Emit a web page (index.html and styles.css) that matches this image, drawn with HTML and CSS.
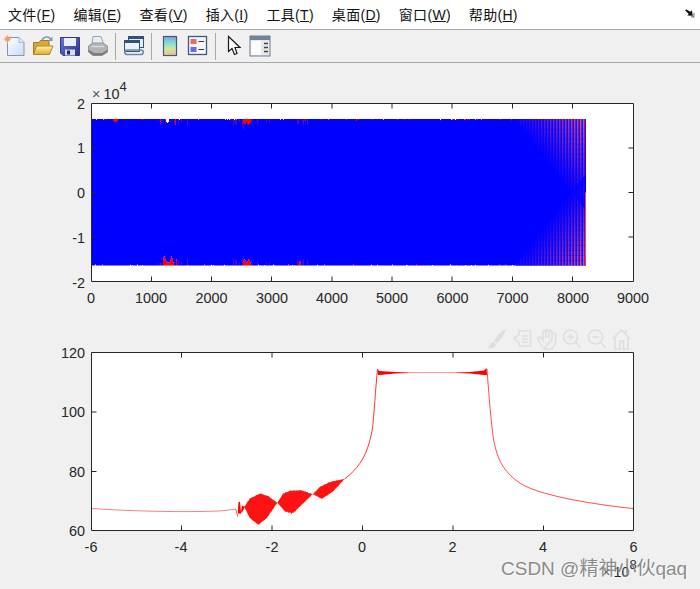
FILE: index.html
```html
<!DOCTYPE html>
<html lang="zh">
<head>
<meta charset="utf-8">
<title>Figure</title>
<link rel="stylesheet" href="styles.css">
</head>
<body>
<div class="window">
  <nav class="menubar">
    <span class="menu">文件(<u>F</u>)</span>
    <span class="menu">编辑(<u>E</u>)</span>
    <span class="menu">查看(<u>V</u>)</span>
    <span class="menu">插入(<u>I</u>)</span>
    <span class="menu">工具(<u>T</u>)</span>
    <span class="menu">桌面(<u>D</u>)</span>
    <span class="menu">窗口(<u>W</u>)</span>
    <span class="menu">帮助(<u>H</u>)</span>
    <svg class="dock" viewBox="0 0 14 12"><path d="M1 1.500 3 .5 8 3.500 10 1.500 11.500 9 4 8.500 6 6.500Z" fill="#111"/><path d="M9 10.500H13V5" fill="none" stroke="#777" stroke-width="1.400"/></svg>
  </nav>
  <div class="toolbar">
    <svg class="tool" viewBox="0 0 28 24">
      <defs>
        <linearGradient id="pg" x1="0" y1="0" x2="1" y2="1"><stop offset="0" stop-color="#ffffff"/><stop offset="1" stop-color="#c4dcf5"/></linearGradient>
        <linearGradient id="fo" x1="0" y1="0" x2="0" y2="1"><stop offset="0" stop-color="#fff2a8"/><stop offset="1" stop-color="#e0a92e"/></linearGradient>
        <linearGradient id="fl" x1="0" y1="0" x2="1" y2="1"><stop offset="0" stop-color="#6a78d8"/><stop offset="1" stop-color="#2c2f88"/></linearGradient>
        <linearGradient id="cb" x1="0" y1="0" x2="0" y2="1"><stop offset="0" stop-color="#7f9fe8"/><stop offset=".35" stop-color="#86dcd8"/><stop offset=".65" stop-color="#d0e8a0"/><stop offset="1" stop-color="#f0b8a0"/></linearGradient>
      </defs>
      <path d="M7.500 3.500H19L24 8.500V21.500H7.500Z" fill="url(#pg)" stroke="#8296b4"/>
      <path d="M19 3.500V8.500H24" fill="#dcebfa" stroke="#a8b8cc"/>
      <circle cx="7.500" cy="5" r="2.400" fill="#f09058"/>
      <path d="M7.500 1V9M3.500 5H11.500M4.800 2.300 10.200 7.700M10.200 2.300 4.800 7.700" stroke="#f4a070" stroke-width=".8"/>
    </svg>
    <svg class="tool" viewBox="0 0 28 24">
      <path d="M5.500 20.500V8.500H11L12.500 6.500H21V20.500Z" fill="#d8a838" stroke="#a07a28"/>
      <path d="M5.500 20.500 8.500 12H25L21.500 20.500Z" fill="url(#fo)" stroke="#b08a28"/>
      <path d="M14 6C16 2.500 20 2 23 5" fill="none" stroke="#7f98b4" stroke-width="1.600"/>
      <path d="M24.500 2.500V7H20Z" fill="#7f98b4"/>
    </svg>
    <svg class="tool" viewBox="0 0 28 24">
      <path d="M4.500 3.500H23.500V21.500H7L4.500 19Z" fill="url(#fl)" stroke="#34368c"/>
      <rect x="8" y="4" width="12" height="8" fill="#e8f0fb"/>
      <rect x="9" y="15.500" width="10" height="6" fill="#d8dce8"/>
      <rect x="11" y="16.500" width="3" height="4" fill="#2a2a50"/>
    </svg>
    <svg class="tool" viewBox="0 0 28 24">
      <path d="M9 2.500H17L19.500 10H8Z" fill="#e8eef4" stroke="#9aa4ac"/>
      <path d="M4.500 12 9 9H19L23.500 12V18L18 21.500H9L4.500 18Z" fill="#b0b4b4" stroke="#969898"/>
      <path d="M4.500 15.500 10 19H18.500L23.500 15.500V18L18 21.500H9L4.500 18Z" fill="#7c7e7e"/>
      <path d="M7 12.500H20" stroke="#dadcdc" stroke-width="1.400"/>
    </svg>
    <i class="sep"></i>
    <svg class="tool" viewBox="0 0 28 24">
      <rect x="8.500" y="2.500" width="15" height="11" fill="#e8eef6" stroke="#34507c"/>
      <rect x="8.500" y="2.500" width="15" height="2.500" fill="#34507c"/>
      <rect x="4.500" y="6.500" width="15" height="11" fill="#eef2f8" stroke="#34507c"/>
      <rect x="4.500" y="6.500" width="15" height="2.500" fill="#34507c"/>
      <path d="M7 16A2.200 2.200 0 0 0 7 20.500H12.500M7 16H15.500M12.500 20.500H21A2.200 2.200 0 0 0 21 16H15.500" fill="none" stroke="#6a86a8" stroke-width="1.600"/>
    </svg>
    <i class="sep"></i>
    <svg class="tool" viewBox="0 0 28 24">
      <rect x="7.500" y="2.500" width="13" height="19" fill="url(#cb)" stroke="#465a78" stroke-width="1.200"/>
    </svg>
    <svg class="tool" viewBox="0 0 28 24">
      <rect x="4.500" y="2.500" width="18" height="18" fill="#f4f6fa" stroke="#3c5a86" stroke-width="1.300"/>
      <rect x="6.500" y="5" width="6" height="5" fill="#ee6868"/>
      <rect x="6.500" y="13" width="6" height="5" fill="#6a6ae8"/>
      <path d="M14.500 7.500H20M14.500 15.500H20" stroke="#333" stroke-width="1.200"/>
    </svg>
    <i class="sep"></i>
    <svg class="tool" viewBox="0 0 28 24">
      <path d="M8.500 2.500V17.500L12 14.500 14.500 20.500 17 19.500 15 13.500H20Z" fill="#fff" stroke="#1a1a1a" stroke-width="1.200"/>
    </svg>
    <svg class="tool tool-tight" viewBox="0 0 28 24">
      <rect x="4" y="2" width="20" height="20" fill="#e6e8ea" stroke="#6e7f90"/>
      <rect x="4" y="2" width="20" height="4" fill="#6e8498"/>
      <rect x="5" y="7" width="10" height="14" fill="#fbfbfb"/>
      <path d="M18 9.500H22M18 13.500H22M18 17.500H22" stroke="#444" stroke-width="1.500"/>
    </svg>
  </div>
  <main class="figure">
    <svg class="canvas" viewBox="0 63 700 526">
      <rect class="plot" x="91.500" y="103.500" width="542" height="178"/>
      <g id="signal"></g>
      <path class="axis" d="M91.500 103.500H633.500V281.500H91.500Z"/>
      <path class="axis" d="M151.500 281.500v-5M211.500 281.500v-5M271.500 281.500v-5M332 281.500v-5M392 281.500v-5M452 281.500v-5M512.500 281.500v-5M572.500 281.500v-5M151.500 103.500v5M211.500 103.500v5M271.500 103.500v5M332 103.500v5M392 103.500v5M452 103.500v5M512.500 103.500v5M572.500 103.500v5M91.500 148h5M91.500 192.500h5M91.500 237h5M633.500 148h-5M633.500 192.500h-5M633.500 237h-5"/>
      <text class="lab end" x="85" y="108.500">2</text>
      <text class="lab end" x="85" y="153">1</text>
      <text class="lab end" x="85" y="198">0</text>
      <text class="lab end" x="85" y="242.500">-1</text>
      <text class="lab end" x="85" y="288">-2</text>
      <text class="lab mid" x="91" y="303">0</text>
      <text class="lab mid" x="151" y="303">1000</text>
      <text class="lab mid" x="211.500" y="303">2000</text>
      <text class="lab mid" x="272" y="303">3000</text>
      <text class="lab mid" x="332" y="303">4000</text>
      <text class="lab mid" x="392" y="303">5000</text>
      <text class="lab mid" x="452.500" y="303">6000</text>
      <text class="lab mid" x="512.500" y="303">7000</text>
      <text class="lab mid" x="573" y="303">8000</text>
      <text class="lab mid" x="633" y="303">9000</text>
      <text class="lab" x="92" y="99"><tspan class="times">×</tspan>10<tspan class="sup" dy="-8">4</tspan></text>

      <rect class="plot" x="91.500" y="352.500" width="542" height="178"/>
      <g id="spectrum"></g>
      <path class="axis" d="M91.500 352.500H633.500V530.500H91.500Z"/>
      <path class="axis" d="M181.500 530.500v-5M272 530.500v-5M362.500 530.500v-5M453 530.500v-5M543.500 530.500v-5M181.500 352.500v5M272 352.500v5M362.500 352.500v5M453 352.500v5M543.500 352.500v5M91.500 412h5M91.500 471.500h5M633.500 412h-5M633.500 471.500h-5"/>
      <text class="lab end" x="85" y="357.500">120</text>
      <text class="lab end" x="85" y="417">100</text>
      <text class="lab end" x="85" y="477">80</text>
      <text class="lab end" x="85" y="536">60</text>
      <text class="lab mid" x="91" y="552">-6</text>
      <text class="lab mid" x="181" y="552">-4</text>
      <text class="lab mid" x="272" y="552">-2</text>
      <text class="lab mid" x="362" y="552">0</text>
      <text class="lab mid" x="452.500" y="552">2</text>
      <text class="lab mid" x="543" y="552">4</text>
      <text class="lab mid" x="633.500" y="552">6</text>
      <text class="lab" x="602" y="576.500"><tspan class="times">×</tspan>10<tspan class="sup" dy="-8">8</tspan></text>

      <g class="ghost">
        <path class="ghost-fill" d="M506 329C501 331 496 337 494 341L497 343C501 340 505 334 506 329ZM493 342C490 343 490 346 488 348C492 349 496 347 496 344Z"/>
        <path d="M524 331H530.500V346H519V342.500L514 338.500 519 334.500V331ZM522 336H528M522 339H528M522 342H528"/>
        <path d="M543 348C541 344 538 341 538 338 539 336 541 338 543 340V333C543 330 546 331 546 333V338M546 338V331C546 329 549 329 549 331V338M549 338V332C549 330 552 330 552 332V339M552 339V334C552 332 555.500 333 555.500 335V342C555.500 345 553 347 552 349H544Z"/>
        <circle cx="570.500" cy="337" r="7"/>
        <path d="M575.500 342 580.500 348M567 337H574M570.500 333.500V340.500"/>
        <circle cx="595.500" cy="337" r="7"/>
        <path d="M600.500 342 605.500 348M592 337H599"/>
        <path d="M612.500 339 621.500 330 630.500 339M615 337V349H620V341H623.500V349H628V337M626 330V333"/>
      </g>
    </svg>
    <div class="watermark">CSDN @精神小伙qaq</div>
  </main>
</div>
<script src="app.js"></script>
</body>
</html>
```
FILE: styles.css
```css
html, body {
  margin: 0;
  padding: 0;
  background: #f0f0f0;
  overflow: hidden;
}
.window {
  width: 700px;
  height: 589px;
  display: flex;
  flex-direction: column;
  font-family: "Liberation Sans", Arial, sans-serif;
}
.menubar {
  height: 27px;
  padding-bottom: 2px;
  flex: none;
  display: flex;
  align-items: center;
  gap: 18px;
  padding-left: 8px;
  background: #fff;
  border-bottom: 1px solid #a8a8a8;
  font-family: "Liberation Sans", "Noto Sans CJK SC", sans-serif;
  font-size: 14px;
  letter-spacing: 0.3px;
  color: #111;
}
.menu {
  white-space: nowrap;
}
.dock {
  width: 11px;
  height: 9px;
  margin-left: auto;
  margin-right: 5px;
}
.toolbar {
  height: 32px;
  flex: none;
  display: flex;
  align-items: center;
  background: #f0f0f0;
  border-bottom: 1px solid #a8a8a8;
}
.tool {
  width: 28px;
  height: 24px;
  flex: none;
}
.tool-tight {
  margin-left: -2px;
}
.sep {
  width: 1px;
  height: 27px;
  margin: 0 4px 0 3px;
  background: #a8a8a8;
}
.figure {
  position: relative;
  flex: 1;
}
.canvas {
  display: block;
  width: 700px;
  height: 526px;
}
.plot {
  fill: #fff;
}
.axis {
  fill: none;
  stroke: #262626;
  stroke-width: 1;
}
.lab {
  font-family: "Liberation Sans", Arial, sans-serif;
  font-size: 14.400px;
  fill: #262626;
}
.end {
  text-anchor: end;
}
.mid {
  text-anchor: middle;
}
.sup {
  font-size: 13px;
}
.times {
  fill: #555;
  letter-spacing: 3px;
}
.ghost {
  fill: none;
  stroke: #dedede;
  stroke-width: 1.600;
}
.ghost-fill {
  fill: #dedede;
  stroke: none;
}
.watermark {
  position: absolute;
  left: 501px;
  top: 494px;
  font-family: "Liberation Sans", "Noto Sans CJK SC", sans-serif;
  font-size: 19px;
  line-height: 24px;
  white-space: nowrap;
  color: rgba(110, 110, 110, 0.8);
  text-shadow: 1px 1px 1px rgba(255, 255, 255, 0.6);
}
```
FILE: app.js
```js
(function () {
  var NS = "http://www.w3.org/2000/svg";
  var seed = 12345;
  function rnd() {
    seed = (seed * 1664525 + 1013904223) % 4294967296;
    return seed / 4294967296;
  }
  function path(parent, d, color, width, opacity) {
    var p = document.createElementNS(NS, "path");
    p.setAttribute("d", d);
    p.setAttribute("fill", "none");
    p.setAttribute("stroke", color);
    p.setAttribute("stroke-width", width);
    if (opacity) p.setAttribute("stroke-opacity", opacity);
    parent.appendChild(p);
  }
  function fillPath(parent, d, color) {
    var p = document.createElementNS(NS, "path");
    p.setAttribute("d", d);
    p.setAttribute("fill", color);
    parent.appendChild(p);
  }
  function interp(pts, x) {
    for (var i = 1; i < pts.length; i++) {
      if (x <= pts[i][0]) {
        var a = pts[i - 1], b = pts[i];
        return a[1] + (b[1] - a[1]) * (x - a[0]) / (b[0] - a[0]);
      }
    }
    return pts[pts.length - 1][1];
  }

  /* top axes: chirp signal */
  var sig = document.getElementById("signal");
  var TOP = 119, BOT = 265.500, MID = 192.500;
  var notchTop = {113: [2, "r"], 114: [3, "r"], 115: [3, "r"], 116: [3, "r"], 117: [2, "r"], 166: [3, "w"], 167: [4, "w"], 168: [3, "w"],
    175: [6, "r"], 160: [3, "r"], 243: [4, "r"], 244: [5, "r"], 245: [5, "r"], 246: [3, "r"], 247: [5, "r"], 248: [6, "r"], 249: [5, "r"], 250: [4, "r"], 305: [2, "r"], 356: [2, "r"]};
  var notchBot = {163: [7, "r"], 164: [9, "r"], 165: [6, "r"], 166: [4, "r"], 167: [3, "r"], 168: [3, "r"], 169: [3, "r"], 170: [5, "r"], 171: [9, "r"], 172: [7, "r"], 173: [3, "r"], 176: [6, "r"],
    243: [4, "r"], 244: [6, "r"], 245: [5, "r"], 246: [3, "r"], 247: [4, "r"], 248: [6, "r"], 249: [5, "r"], 250: [3, "r"], 299: [3, "r"], 300: [4, "r"]};
  var redD = "", blueD = "", purpleD = "";
  for (var x = 91; x < 515; x++) {
    var tn = notchTop[x], bn = notchBot[x];
    var jt = rnd() < 0.1 ? rnd() * 1.2 : 0;
    var jb = rnd() < 0.1 ? rnd() * 1.2 : 0;
    var y1 = TOP + (tn ? tn[0] : jt);
    var y2 = BOT - (bn ? bn[0] : jb);
    blueD += "M" + (x + 0.5) + " " + y1.toFixed(1) + "V" + y2.toFixed(1);
    if (tn && tn[1] === "r") redD += "M" + (x + 0.5) + " " + TOP + "V" + y1.toFixed(1);
    if (bn && bn[1] === "r") redD += "M" + (x + 0.5) + " " + y2.toFixed(1) + "V" + BOT;
    if (!tn && jt > 0.6 && rnd() < 0.35) redD += "M" + (x + 0.5) + " " + TOP + "V" + (TOP + 1);
    if (!bn && jb > 0.6 && rnd() < 0.35) redD += "M" + (x + 0.5) + " " + (BOT - 1) + "V" + BOT;
    var busy = (x > 148 && x < 190) || (x > 232 && x < 270) || (x > 290 && x < 310);
    if (busy && rnd() < 0.3) {
      var len = 2 + rnd() * 5;
      purpleD += "M" + (x + 0.5) + " " + (y1 + 0.5) + "V" + (y1 + len).toFixed(1);
      purpleD += "M" + (x + 0.5) + " " + (y2 - 0.5) + "V" + (y2 - len).toFixed(1);
    }
  }
  path(sig, blueD, "#0000ff", 1);
  path(sig, purpleD, "#a01090", 1, 0.55);
  path(sig, redD, "#ff0000", 1);

  /* the end of the sweep opens up into separate stripes */
  function mix(a, b, t) {
    var c = [];
    for (var i = 0; i < 3; i++) c.push(Math.round(a[i] + (b[i] - a[i]) * t));
    return "rgb(" + c.join(",") + ")";
  }
  var BLUE = [0, 0, 255], RED = [190, 20, 110], LILAC = [140, 110, 240], PURPLE = [70, 10, 200];
  for (var c = 515; c < 586; c++) {
    var depth = Math.max(0, (c - 515) * 1.3);
    var phase = (c - 515) % 3;
    var hot = phase === 0 ? RED : (phase === 1 ? PURPLE : LILAC);
    var amt = 0.12 + 0.88 * Math.pow(Math.min(1, (c - 515) / 70), 1.4);
    path(sig, "M" + (c + 0.5) + " " + TOP + "V" + BOT, "#0000ff", 1);
    var steps = Math.max(1, Math.round(depth / 5));
    for (var s = 0; s < steps; s++) {
      var a = s / steps, b = (s + 1) / steps;
      var col = mix(hot, BLUE, (1 - amt) + amt * a);
      path(sig, "M" + (c + 0.5) + " " + (TOP + depth * a).toFixed(1) + "V" + (TOP + depth * b).toFixed(1), col, 1);
      path(sig, "M" + (c + 0.5) + " " + (BOT - depth * a).toFixed(1) + "V" + (BOT - depth * b).toFixed(1), col, 1);
    }
  }
  path(sig, "M585.500 " + MID + "V" + BOT, "#d84870", 1);

  /* bottom axes: spectrum */
  var spec = document.getElementById("spectrum");
  var upper = [[244.300, 506.700], [250, 498.300], [260, 493.300], [268.300, 496], [277.300, 502.700], [283.300, 493.300], [290, 490.700], [300, 490], [306.700, 491.700], [312.700, 494.300], [320, 486.700], [330, 481.700], [345, 478.700]];
  var lower = [[244.300, 506.700], [250, 518.300], [258.300, 525], [266.700, 518.300], [277.300, 502.700], [285, 511.700], [293.300, 513], [303.300, 503.300], [312.700, 494.300], [321.700, 499], [333, 491.700], [345, 478.700]];
  var band = "";
  for (var px = 244.5; px <= 345; px += 0.5) {
    var u = interp(upper, px) + rnd() * 0.6;
    var l = interp(lower, px) - rnd() * 0.6;
    var spike = (px > 255 && px < 266 && rnd() < 0.15) ? rnd() * 3 : 0;
    var spike2 = (px > 286 && px < 296 && rnd() < 0.12) ? rnd() * 3 : 0;
    band += "M" + px + " " + u.toFixed(1) + "V" + (l + spike + spike2).toFixed(1);
  }
  path(spec, band, "#ff0000", 0.8);
  fillPath(spec, "M235 509.200 236.500 510 237.500 517 238.500 502 240 501.700 241 512 242 505.500 244.500 506.700 244.500 508 242.500 511.500 240 514 238.500 513 237.500 517.500 236 511Z", "#ff0000");
  path(spec, "M91 508.500C130 511 170 512 200 511.500S225 510 236 509.200", "#ff0000", 0.6, 0.85);
  path(spec, "M345 478.700 350 474.500C355 470 359 465 362 460C368 450 371 437 372.500 428C374 415 375.500 390 377.500 369", "#ff0000", 0.8);
  path(spec, "M487 369C488.500 390 490.500 415 492.500 432C494 445 497 455 501 463C506 472 514 480 524 485.500C545 496 590 504 633 508.500", "#ff0000", 0.7);
  fillPath(spec, "M377.500 368.500 379 371 395 372 410 372.500 455 372.500 470 372 484 370.500 486.500 368 487 375 484 375 470 373.500 455 373 410 373 395 373.500 380 375 378 375Z", "#ff0000");
  path(spec, "M408 372.700H457", "#ffb0b0", 0.7);
})();
```
